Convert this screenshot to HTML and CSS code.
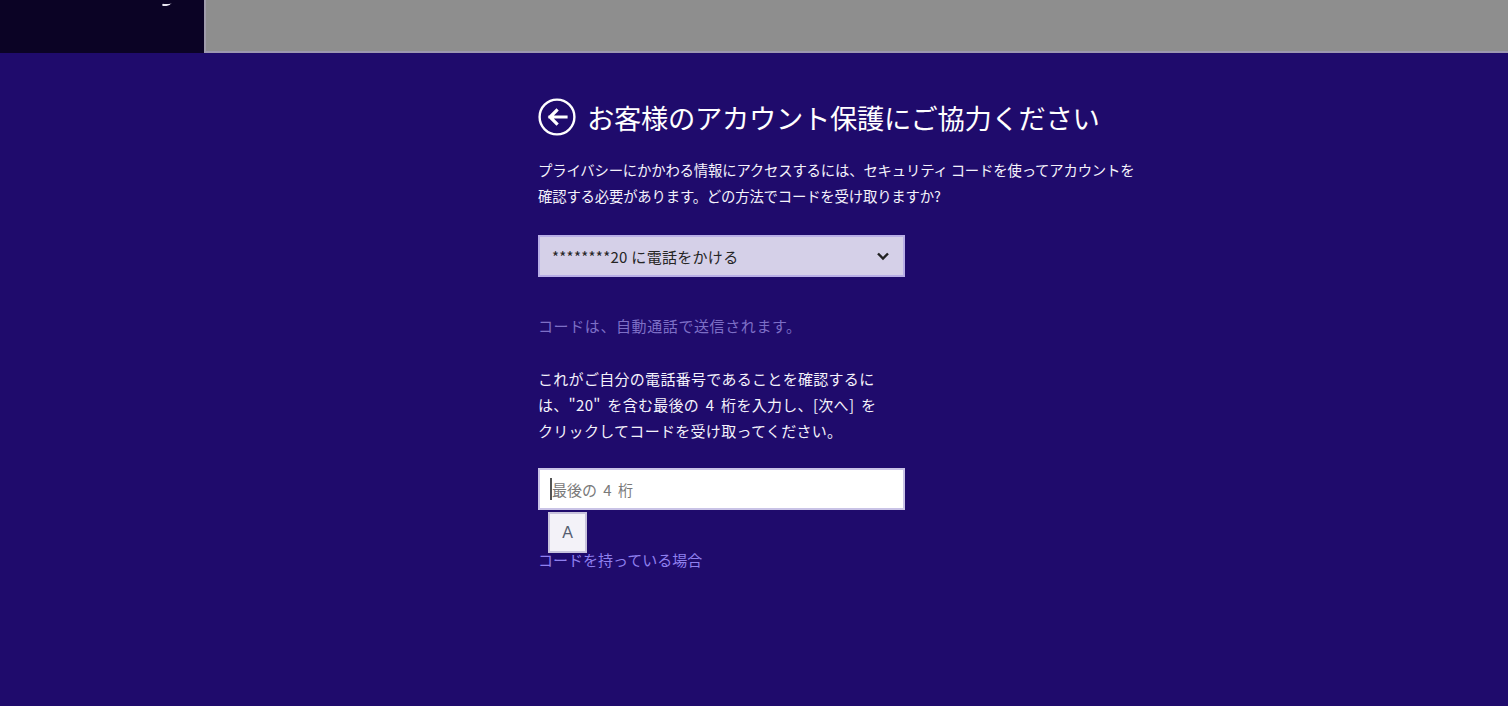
FILE: index.html
```html
<!DOCTYPE html>
<html lang="ja">
<head>
<meta charset="utf-8">
<link rel="stylesheet" href="styles.css">
</head>
<body>
<div class="topbar">
  <div class="top-left"><span class="mark"></span></div>
  <div class="top-right"></div>
</div>
<main class="page">
  <div class="content">
    <h1 class="title">
      <svg class="back" width="38" height="38" viewBox="0 0 38 38">
        <circle cx="19" cy="19" r="17.4" fill="none" stroke="#fff" stroke-width="2.4"/>
        <path d="M28 19H12M18.5 12.5L12 19l6.5 6.5" fill="none" stroke="#fff" stroke-width="3.2" stroke-linecap="square"/>
      </svg>
      <span>お客様のアカウント保護にご協力ください</span>
    </h1>
    <p class="intro">プライバシーにかかわる情報にアクセスするには、セキュリティ コードを使ってアカウントを<br>確認する必要があります。どの方法でコードを受け取りますか?</p>
    <div class="select">
      <span>********20 に電話をかける</span>
      <svg width="14" height="10" viewBox="0 0 14 10"><path d="M2 2.5l5 5 5-5" fill="none" stroke="#222" stroke-width="2.4"/></svg>
    </div>
    <p class="note">コードは、自動通話で送信されます。</p>
    <p class="confirm">これがご自分の電話番号であることを確認するに<br>は、"20" を含む最後の 4 桁を入力し、[次へ] を<br>クリックしてコードを受け取ってください。</p>
    <div class="field-wrap">
      <div class="field"><span class="caret"></span><span class="placeholder">最後の 4 桁</span></div>
      <div class="ime">A</div>
    </div>
    <a class="link">コードを持っている場合</a>
  </div>
</main>
</body>
</html>
```
FILE: styles.css
```css
html, body {
  margin: 0;
  padding: 0;
  background: #1f0b6c;
  font-family: "Noto Sans CJK JP", "Noto Sans", sans-serif;
  color: #ffffff;
}
.topbar {
  display: flex;
  height: 53px;
}
.top-left {
  width: 204px;
  background: #0b0325;
  position: relative;
}
.mark {
  position: absolute;
  left: 163px;
  top: 0;
  width: 9px;
  height: 4px;
  border-bottom: 2px solid #e8e6f0;
  transform: skewX(-40deg);
  border-radius: 0 0 3px 3px;
}
.top-right {
  flex: 1;
  background: #8e8e8e;
  border-left: 2px solid #a09cab;
  border-bottom: 2px solid #9d97b0;
  box-sizing: border-box;
}
.page {
  height: 653px;
}
.content {
  margin-left: 538px;
  width: 620px;
  padding-top: 44px;
}
.title {
  display: flex;
  align-items: center;
  gap: 11px;
  margin: 0;
  height: 40px;
  font-size: 27.3px;
  font-weight: 400;
  letter-spacing: -0.3px;
  color: #ffffff;
}
.back {
  flex: none;
}
.intro {
  margin: 20px 0 0;
  font-size: 14.4px;
  line-height: 26px;
  letter-spacing: -0.2px;
  color: #f4f2fb;
}
.select {
  margin-top: 26px;
  width: 367px;
  height: 42px;
  box-sizing: border-box;
  background: #d5d0e8;
  border: 2px solid #b8aee6;
  display: flex;
  align-items: center;
  justify-content: space-between;
  padding: 0 13px 0 12px;
  color: #252525;
  font-size: 15px;
}
.select span {
  letter-spacing: 0.3px;
}
.note {
  margin: 37px 0 0;
  font-size: 15px;
  line-height: 24px;
  color: #7d6fc6;
  letter-spacing: 0.6px;
}
.confirm {
  margin: 28px 0 0;
  font-size: 15px;
  line-height: 26px;
  color: #f4f2fb;
  letter-spacing: 0.3px;
  word-spacing: 3px;
}
.field-wrap {
  position: relative;
  margin-top: 24px;
}
.field {
  width: 367px;
  height: 42px;
  box-sizing: border-box;
  background: #ffffff;
  border: 2px solid #c9c3e6;
  display: flex;
  align-items: center;
  padding-left: 10px;
}
.caret {
  width: 2px;
  height: 22px;
  background: #555;
}
.placeholder {
  color: #7a7a7a;
  font-size: 15px;
  word-spacing: 3px;
}
.ime {
  position: absolute;
  left: 10px;
  top: 44px;
  width: 39px;
  height: 41px;
  box-sizing: border-box;
  background: #f3f2f8;
  border: 2px solid #c8c3dc;
  color: #555d70;
  font-family: "Liberation Sans", sans-serif;
  font-size: 16px;
  display: flex;
  align-items: center;
  justify-content: center;
  z-index: 2;
}
.link {
  display: block;
  margin-top: 38px;
  font-size: 15px;
  line-height: 24px;
  color: #8f80ef;
  position: relative;
  z-index: 1;
}
```
